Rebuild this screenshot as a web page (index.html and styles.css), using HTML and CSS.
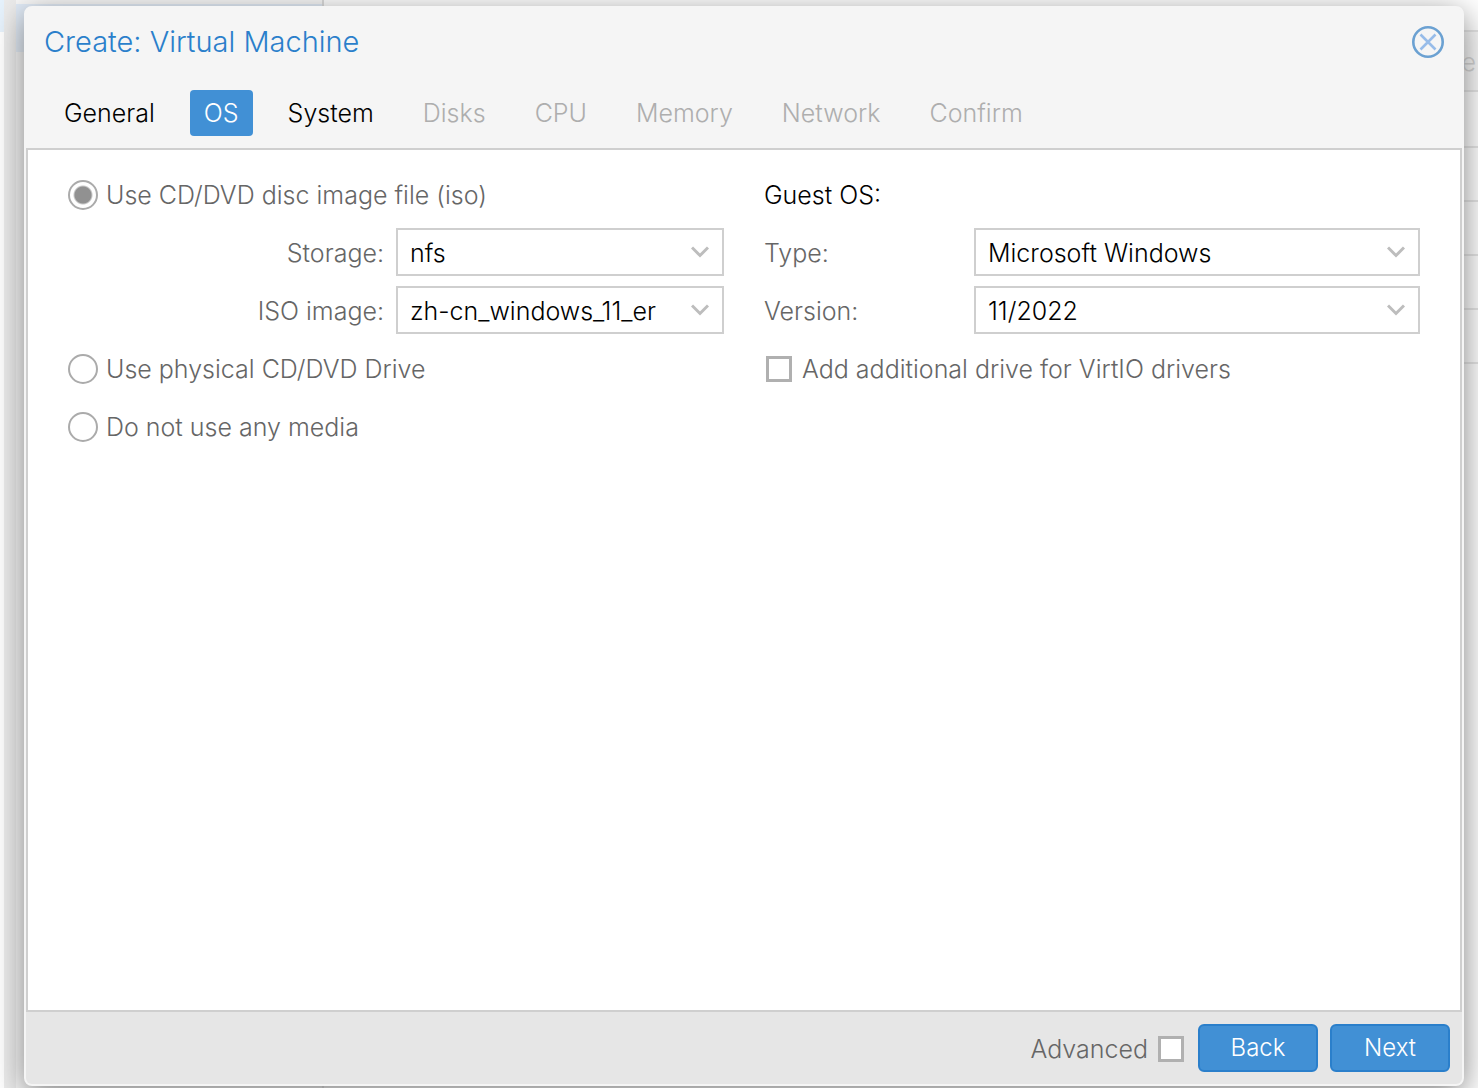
FILE: index.html
```html
<!DOCTYPE html>
<html lang="en">

<head>
    <meta charset="UTF-8">
    <meta name="viewport" content="width=device-width, initial-scale=1.0">
    <title>Create: Virtual Machine</title>
    <link rel="stylesheet" href="styles.css">
</head>

<body>
    <!-- page behind the dialog -->
    <div class="backdrop">
        <div class="nav-edge"></div>
        <div class="splitter"></div>
        <div class="tree">
            <div class="tree-selected"></div>
        </div>
        <div class="list">
            <div class="list-row first"></div>
            <div class="list-row head">e</div>
            <div class="list-row"></div>
            <div class="list-row"></div>
            <div class="list-row"></div>
            <div class="list-row"></div>
            <div class="list-row"></div>
        </div>
    </div>

    <main class="window">
        <header class="title-bar">
            <h1>Create: Virtual Machine</h1>
            <button class="close" type="button" aria-label="Close">
                <svg width="32" height="32" viewBox="0 0 32 32" fill="none">
                    <circle cx="16" cy="16" r="14.7" stroke="#6ba1d2" stroke-width="2.6" />
                    <path d="M8.5 8.5L23.5 23.5M23.5 8.5L8.5 23.5" stroke="#97bce9" stroke-width="2.6" />
                </svg>
            </button>
        </header>

        <nav class="tabs">
            <button class="tab" type="button">General</button>
            <button class="tab active" type="button">OS</button>
            <button class="tab" type="button">System</button>
            <button class="tab" type="button" disabled>Disks</button>
            <button class="tab" type="button" disabled>CPU</button>
            <button class="tab" type="button" disabled>Memory</button>
            <button class="tab" type="button" disabled>Network</button>
            <button class="tab" type="button" disabled>Confirm</button>
        </nav>

        <form class="panel" id="os-form">
            <section class="column">
                <div class="row">
                    <input type="radio" name="media" id="media-iso" checked>
                    <label for="media-iso">Use CD/DVD disc image file (iso)</label>
                </div>
                <div class="row half">
                    <label for="storage">Storage:</label>
                    <div class="combo">
                        <select id="storage">
                            <option>nfs</option>
                        </select>
                        <svg width="18" height="12" viewBox="0 0 18 12"><path d="M1 1.5L9 9.5L17 1.5" /></svg>
                    </div>
                </div>
                <div class="row half">
                    <label for="iso">ISO image:</label>
                    <div class="combo">
                        <select id="iso">
                            <option>zh-cn_windows_11_er</option>
                        </select>
                        <svg width="18" height="12" viewBox="0 0 18 12"><path d="M1 1.5L9 9.5L17 1.5" /></svg>
                    </div>
                </div>
                <div class="row">
                    <input type="radio" name="media" id="media-drive">
                    <label for="media-drive">Use physical CD/DVD Drive</label>
                </div>
                <div class="row">
                    <input type="radio" name="media" id="media-none">
                    <label for="media-none">Do not use any media</label>
                </div>
            </section>

            <section class="column">
                <div class="row">
                    <h2>Guest OS:</h2>
                </div>
                <div class="row wide">
                    <label for="type">Type:</label>
                    <div class="combo">
                        <select id="type">
                            <option>Microsoft Windows</option>
                        </select>
                        <svg width="18" height="12" viewBox="0 0 18 12"><path d="M1 1.5L9 9.5L17 1.5" /></svg>
                    </div>
                </div>
                <div class="row wide">
                    <label for="version">Version:</label>
                    <div class="combo">
                        <select id="version">
                            <option>11/2022</option>
                        </select>
                        <svg width="18" height="12" viewBox="0 0 18 12"><path d="M1 1.5L9 9.5L17 1.5" /></svg>
                    </div>
                </div>
                <div class="row check">
                    <input type="checkbox" id="virtio">
                    <label for="virtio">Add additional drive for VirtIO drivers</label>
                </div>
            </section>
        </form>

        <footer class="toolbar">
            <div class="row check">
                <label for="advanced">Advanced</label>
                <input type="checkbox" id="advanced">
            </div>
            <button class="button" type="button">Back</button>
            <button class="button" type="button">Next</button>
        </footer>
    </main>
</body>

</html>
```

FILE: styles.css
```css
* {
    box-sizing: border-box;
}

body {
    margin: 0;
    min-height: 100vh;
    display: grid;
    overflow: hidden;
    font-family: Inter, "Liberation Sans", sans-serif;
    font-weight: 300;
    font-size: 25px;
    line-height: 32px;
    color: #666;
}

h1, h2, button, select {
    margin: 0;
    font: inherit;
}

/* backdrop and window share one grid cell */
.backdrop, .window {
    grid-area: 1 / 1;
}

.backdrop {
    display: flex;
    background-color: #fff;
}

.nav-edge {
    width: 4px;
    border-top: 32px solid #e6f2fc;
}

.splitter {
    width: 12px;
    background-color: #ececec;
}

.tree {
    width: 308px;
    padding-top: 4px;
    border-right: 2px solid #d8d8d8;
    background-color: #f8f8f8;
}

.tree-selected {
    height: 48px;
    background-color: #e0ebf8;
}

.list {
    flex: 1;
}

.list-row {
    height: 54px;
    border-bottom: 2px solid #e2e2e2;
}

.list-row.first {
    height: 32px;
}

.list-row.head {
    height: 60px;
    padding: 14px 2px;
    text-align: right;
    color: #ccc;
    background-color: #f8f8f8;
}

.list-row.head + .list-row {
    height: 56px;
}

.window {
    z-index: 1;
    margin: 6px 14px 2px 24px;
    display: flex;
    flex-direction: column;
    border: 2px solid #f5f5f5;
    border-radius: 8px;
    background-color: #f5f5f5;
    box-shadow: 0 8px 32px #808080;
}

.title-bar {
    display: flex;
    justify-content: space-between;
    align-items: center;
    padding: 18px;
}

.title-bar h1 {
    font-size: 29px;
    color: #2a7fcb;
}

.close {
    width: 32px;
    height: 32px;
    padding: 0;
    border: none;
    background: none;
    cursor: pointer;
}

.close svg {
    display: block;
}

.tabs {
    display: flex;
    gap: 21px;
    padding: 14px 24px 12px;
}

.tab {
    height: 46px;
    padding: 0 14px;
    border: none;
    border-radius: 4px;
    background: none;
    color: #000;
}

.tab.active {
    background-color: #4190d5;
    color: #fff;
}

.tab:disabled {
    color: #aeaeae;
}

.panel {
    flex: 1;
    display: grid;
    grid-template-columns: 1fr 1fr;
    gap: 40px;
    padding: 20px 40px;
    border: 2px solid #cfcfcf;
    background-color: #fff;
}

.column {
    display: flex;
    flex-direction: column;
    gap: 10px;
}

.row {
    height: 48px;
    display: flex;
    align-items: center;
    gap: 8px;
    padding-top: 2px;
}

.row h2 {
    color: #000;
}

.row.half, .row.wide {
    display: grid;
    gap: 0;
    padding-top: 0;
}

.row.half label, .row.wide label {
    padding-top: 2px;
}

.row.half {
    grid-template-columns: 1fr 1fr;
}

.row.half label {
    padding-right: 12px;
    text-align: right;
}

.row.wide {
    grid-template-columns: 210px 1fr;
}

.combo {
    display: grid;
    align-items: center;
}

.combo select, .combo svg {
    grid-area: 1 / 1;
}

.combo select {
    appearance: none;
    width: 100%;
    height: 48px;
    padding: 2px 54px 0 12px;
    border: 2px solid #cfcfcf;
    border-radius: 0;
    background-color: #fff;
    color: #000;
}

.combo svg {
    justify-self: end;
    margin-right: 15px;
    fill: none;
    stroke: #bdbdbd;
    stroke-width: 3;
    pointer-events: none;
}

input[type="radio"], input[type="checkbox"] {
    appearance: none;
    flex: none;
    margin: 0;
    background-color: #fff;
}

input[type="radio"] {
    width: 30px;
    height: 30px;
    border: 2px solid #ababab;
    border-radius: 50%;
}

input[type="radio"]:checked {
    background-image: radial-gradient(circle, #919191 8px, #fff 10px);
}

input[type="checkbox"] {
    width: 26px;
    height: 26px;
    border: 3px solid #b0b0b0;
}

.row.check {
    gap: 10px;
    padding-left: 2px;
    padding-right: 2px;
}

.toolbar {
    display: flex;
    justify-content: flex-end;
    align-items: center;
    gap: 12px;
    padding: 12px;
    border-radius: 0 0 6px 6px;
    background-color: #e6e6e6;
}

.button {
    width: 120px;
    height: 48px;
    border: 2px solid #2a7fcb;
    border-radius: 6px;
    background-color: #4190d5;
    color: #fff;
    font-size: 24px;
    cursor: pointer;
}
```
